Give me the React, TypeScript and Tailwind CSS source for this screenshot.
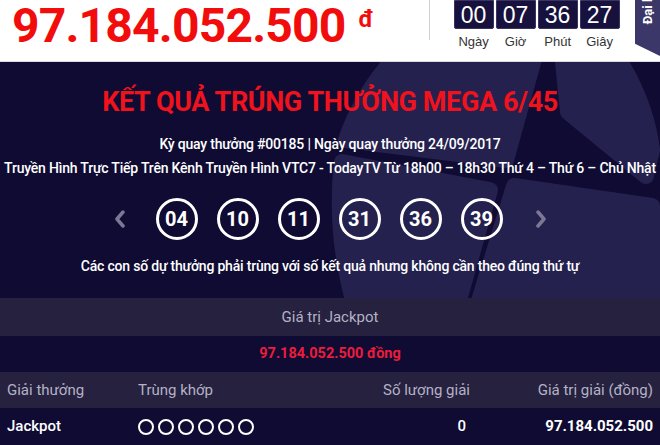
import React from 'react'

const balls = ['04', '10', '11', '31', '36', '39']
const countdown = [
  {value: '00', label: 'Ngày'},
  {value: '07', label: 'Giờ'},
  {value: '36', label: 'Phút'},
  {value: '27', label: 'Giây'},
]

const Pinwheel = () => (
  <svg className="absolute inset-0 pointer-events-none" width="660" height="236" viewBox="0 62 660 236">
    <g fill="#25214f" stroke="#25214f" strokeWidth="16" strokeLinejoin="round">
      <path d="M400 52 L536 52 L506 160 L346 140 Q362 92 400 52 Z" />
      <path d="M562 52 L614 52 Q646 100 652 150 L646 176 L568 112 Z" />
      <path d="M514 186 L652 206 L652 304 L478 304 Z" />
      <path d="M342 162 L490 190 L458 304 L354 304 Q334 232 342 162 Z" />
    </g>
  </svg>
)

const Header = () => (
  <header className="h-[62px] flex items-start bg-white border-b border-[#d9d9de]">
    <div className="pl-[12px] flex items-start text-[#f20d0d] font-bold">
      <span className="text-[48px] leading-[56px] -mt-[2px] tracking-[-0.8px]">97.184.052.500</span>
      <span className="text-[24px] leading-none ml-[13px] mt-[7px]">đ</span>
    </div>
    <div className="ml-[55px] w-px h-[40px] bg-[#cfcfd4]" />
    <div className="ml-[24px] flex gap-[2px] font-['Liberation_Sans',sans-serif]">
      {countdown.map((c) => (
        <div key={c.label} className="flex flex-col items-center">
          <div className="w-[40px] h-[29px] bg-[#16113d] border border-[#3a3560] rounded-b-[2px] text-white text-[23px] leading-[29px] text-center">
            {c.value}
          </div>
          <div className="mt-[6px] text-[13px] text-[#333] leading-none">{c.label}</div>
        </div>
      ))}
    </div>
    <div className="ml-auto w-[25px] h-[56px] bg-[#3b3768] [clip-path:polygon(0_0,100%_0,100%_100%,0_78%)] flex items-start justify-center overflow-hidden">
      <span className="mt-[-8px] text-white text-[13px] font-bold [writing-mode:vertical-rl] rotate-180 leading-none whitespace-nowrap">
        Đại lý
      </span>
    </div>
  </header>
)

const Results = () => (
  <section className="relative h-[236px] bg-[#0f0b33] overflow-hidden">
    <Pinwheel />
    <div className="relative flex flex-col items-center text-white">
      <h1 className="mt-[27px] text-[27px] font-bold text-[#f0121c] leading-none tracking-[-0.4px]">
        KẾT QUẢ TRÚNG THƯỞNG MEGA 6/45
      </h1>
      <p className="mt-[21px] text-[14px] font-medium leading-none tracking-[-0.2px]">
        Kỳ quay thưởng #00185 | Ngày quay thưởng 24/09/2017
      </p>
      <p className="mt-[10px] text-[14px] font-medium leading-none tracking-[-0.2px] whitespace-nowrap">
        Truyền Hình Trực Tiếp Trên Kênh Truyền Hình VTC7 - TodayTV Từ 18h00 – 18h30 Thứ 4 – Thứ 6 – Chủ Nhật
      </p>
      <div className="mt-[23px] flex items-center">
        <svg width="12" height="18" viewBox="0 0 12 18" className="mr-[30px]">
          <path d="M9 2 L3 9 L9 16" fill="none" stroke="#7b7794" strokeWidth="3.5" strokeLinecap="round" strokeLinejoin="round" />
        </svg>
        <div className="flex gap-[19px]">
          {balls.map((b) => (
            <div
              key={b}
              className="w-[42px] h-[42px] rounded-full border-[3px] border-white flex items-center justify-center text-[20px] font-bold leading-none"
            >
              {b}
            </div>
          ))}
        </div>
        <svg width="12" height="18" viewBox="0 0 12 18" className="ml-[32px]">
          <path d="M3 2 L9 9 L3 16" fill="none" stroke="#7b7794" strokeWidth="3.5" strokeLinecap="round" strokeLinejoin="round" />
        </svg>
      </div>
      <p className="mt-[19px] text-[14px] font-medium leading-none tracking-[-0.2px]">
        Các con số dự thưởng phải trùng với số kết quả nhưng không cần theo đúng thứ tự
      </p>
    </div>
  </section>
)

const PrizeTable = () => (
  <div className="text-[15px] leading-none">
    <div className="h-[38px] bg-[#25213f] flex items-center justify-center text-[#b4b2c6]">Giá trị Jackpot</div>
    <div className="h-[36px] bg-[#0f0b33] flex items-center justify-center text-[#ec1c3c] text-[14.5px] font-bold">
      97.184.052.500 đồng
    </div>
    <div className="h-[36px] bg-[#25213f] grid grid-cols-[131px_200px_132px_1fr] items-center px-[7px] text-[#b4b2c6]">
      <span>Giải thưởng</span>
      <span>Trùng khớp</span>
      <span className="text-right">Số lượng giải</span>
      <span className="text-right">Giá trị giải (đồng)</span>
    </div>
    <div className="h-[37px] bg-[#0f0b33] grid grid-cols-[131px_200px_128px_1fr] items-center px-[7px] text-white">
      <span className="font-medium">Jackpot</span>
      <span className="flex gap-[4px]">
        {balls.map((b) => (
          <span key={b} className="w-[16px] h-[16px] rounded-full border-2 border-white" />
        ))}
      </span>
      <span className="text-right font-medium">0</span>
      <span className="text-right font-bold">97.184.052.500</span>
    </div>
  </div>
)

export default function App() {
  return (
    <div className="w-[660px] h-[445px] overflow-hidden bg-white font-['Roboto',sans-serif]">
      <Header />
      <Results />
      <PrizeTable />
    </div>
  )
}
